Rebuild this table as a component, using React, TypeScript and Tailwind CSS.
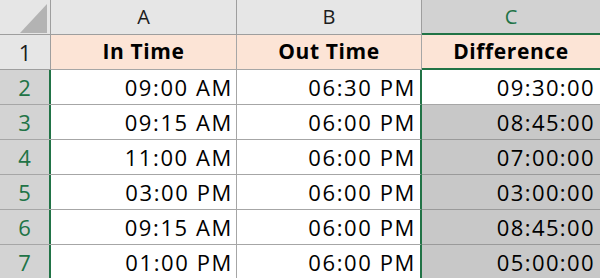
const rows = [
  ["09:00 AM", "06:30 PM", "09:30:00"],
  ["09:15 AM", "06:00 PM", "08:45:00"],
  ["11:00 AM", "06:00 PM", "07:00:00"],
  ["03:00 PM", "06:00 PM", "03:00:00"],
  ["09:15 AM", "06:00 PM", "08:45:00"],
  ["01:00 PM", "06:00 PM", "05:00:00"],
]

export default function App() {
  return (
    <div
      className="h-[278px] w-[600px] overflow-hidden bg-white text-black"
      style={{ fontFamily: '"Open Sans", "Liberation Sans", sans-serif' }}
    >
      <div className="grid grid-cols-[51px_186px_185px_178px] auto-rows-[35px]">
        {/* column headers */}
        <div className="relative border-b border-r border-[#9e9e9e] bg-[#e6e6e6]">
          <svg className="absolute left-[20px] top-[4px]" width="28" height="29" viewBox="0 0 28 29">
            <polygon points="0,29 27,29 27,0" fill="#b3b3b3" />
          </svg>
        </div>
        <div className="flex items-center justify-center border-b border-r border-[#9e9e9e] bg-[#e6e6e6] text-[20px] text-[#1c1c1c]">
          A
        </div>
        <div className="flex items-center justify-center border-b border-r border-[#9e9e9e] bg-[#e6e6e6] text-[20px] text-[#1c1c1c]">
          B
        </div>
        <div className="flex items-center justify-center border-b-2 border-[#217346] bg-[#d2d2d2] text-[20px] text-[#217346]">
          C
        </div>

        {/* row 1 */}
        <div className="flex items-center justify-center border-b border-r border-[#9e9e9e] bg-[#e6e6e6] text-[22px] text-[#1c1c1c]">
          1
        </div>
        <div className="flex items-center justify-center border-b border-r border-[#a6a6a6] bg-[#fce4d6] text-[21px] font-bold tracking-[0.6px]">
          In Time
        </div>
        <div className="flex items-center justify-center border-b border-r border-[#a6a6a6] bg-[#fce4d6] text-[21px] font-bold tracking-[0.6px]">
          Out Time
        </div>
        <div className="flex items-center justify-center border-b-2 border-[#217346] bg-[#fce4d6] text-[21px] font-bold tracking-[0.6px]">
          Difference
        </div>

        {rows.map((r, i) => (
          <Row key={i} n={i + 2} cells={r} active={i === 0} />
        ))}
      </div>
    </div>
  )
}

function Row({ n, cells, active }: { n: number; cells: string[]; active: boolean }) {
  return (
    <>
      <div className="flex items-center justify-center border-b border-[#a6a6a6] bg-[#d3d3d3] text-[22px] text-[#217346]">
        <span className="flex-1 text-center">{n}</span>
        <span className="h-full w-[2px] bg-[#217346]" />
      </div>
      <div className="flex items-center justify-end border-b border-r border-[#a6a6a6] pr-[3px] text-[22px] tracking-[1.6px]">
        {cells[0]}
      </div>
      <div className="flex items-center justify-end border-b border-r-2 border-b-[#a6a6a6] border-r-[#217346] pr-[4px] text-[22px] tracking-[1.6px]">
        {cells[1]}
      </div>
      <div
        className={
          active
            ? "flex items-center justify-end border-b border-[#a6a6a6] bg-white pr-[5px] text-[22px] tracking-[1.4px]"
            : "flex items-center justify-end border-b border-[#9a9a9a] bg-[#c8c8c8] pr-[5px] text-[22px] tracking-[1.4px]"
        }
      >
        {cells[2]}
      </div>
    </>
  )
}
